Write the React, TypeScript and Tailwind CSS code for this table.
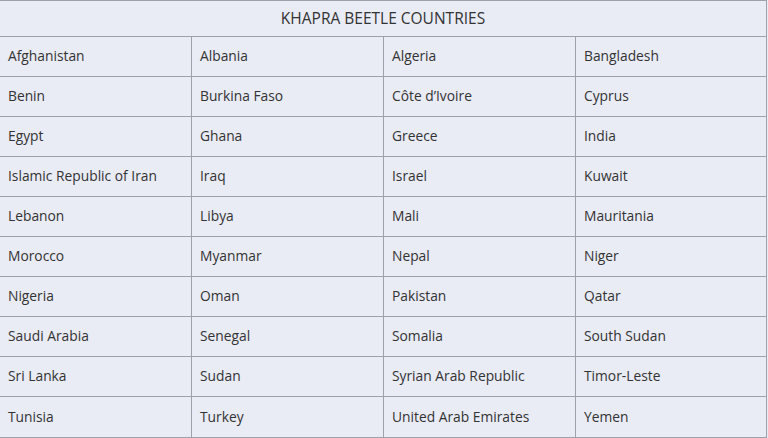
const rows: string[][] = [
  ["Afghanistan", "Albania", "Algeria", "Bangladesh"],
  ["Benin", "Burkina Faso", "Côte d’Ivoire", "Cyprus"],
  ["Egypt", "Ghana", "Greece", "India"],
  ["Islamic Republic of Iran", "Iraq", "Israel", "Kuwait"],
  ["Lebanon", "Libya", "Mali", "Mauritania"],
  ["Morocco", "Myanmar", "Nepal", "Niger"],
  ["Nigeria", "Oman", "Pakistan", "Qatar"],
  ["Saudi Arabia", "Senegal", "Somalia", "South Sudan"],
  ["Sri Lanka", "Sudan", "Syrian Arab Republic", "Timor-Leste"],
  ["Tunisia", "Turkey", "United Arab Emirates", "Yemen"],
];

export default function App() {
  return (
    <div className="w-[768px] h-[438px] bg-[#e9ebf5] font-['Open_Sans',sans-serif] text-[#333333]">
      <div className="w-[767px] border-t border-r border-b border-[#9fa1aa]">
        {/* Title */}
        <div className="h-[36px] flex items-center justify-center border-b border-[#9fa1aa] text-[15.5px]">
          KHAPRA BEETLE COUNTRIES
        </div>

        {/* Rows */}
        {rows.map((row, i) => (
          <div
            key={i}
            className={`grid grid-cols-[192px_192px_192px_1fr] h-[40px] ${
              i < rows.length - 1 ? "border-b border-[#9fa1aa]" : ""
            }`}
          >
            {row.map((name, j) => (
              <div
                key={j}
                className={`flex items-center pl-[8px] text-[13.8px] ${
                  j < 3 ? "border-r border-[#9fa1aa]" : ""
                }`}
              >
                {name}
              </div>
            ))}
          </div>
        ))}
      </div>
    </div>
  );
}
